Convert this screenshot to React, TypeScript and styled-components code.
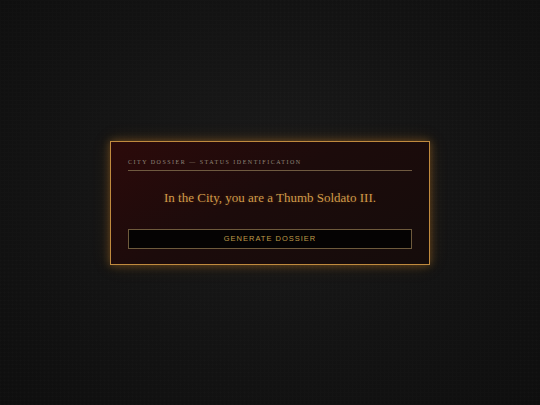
import styled, { createGlobalStyle } from 'styled-components';

const Global = createGlobalStyle`
    html, body {
        margin: 0;
        height: 100%;
        background: #111111;
    }
    #root {
        height: 100%;
    }
`;

const Page = styled.div`
    height: 100%;
    display: flex;
    align-items: center;
    justify-content: center;
    background:
        repeating-linear-gradient(0deg, rgba(255, 255, 255, 0.006) 0 1px, transparent 1px 4px),
        repeating-linear-gradient(90deg, rgba(255, 255, 255, 0.006) 0 1px, transparent 1px 4px),
        radial-gradient(ellipse at 50% 45%, #1a1a1a 0%, #131313 55%, #0e0e0e 100%);
`;

const Card = styled.section`
    box-sizing: border-box;
    width: 320px;
    padding: 17px 17px 15px;
    border: 1px solid #c08a3e;
    background: linear-gradient(150deg, #2c0a0a 0%, #1c0b0b 45%, #150c0b 100%);
    box-shadow: 0 0 8px rgba(200, 130, 40, 0.45), 0 0 18px rgba(200, 120, 30, 0.15);
`;

const Label = styled.div`
    font-family: 'Liberation Serif', 'DejaVu Serif', serif;
    font-size: 6px;
    letter-spacing: 1.5px;
    text-transform: uppercase;
    color: #8f8478;
    padding-bottom: 5px;
    border-bottom: 1px solid #6f5a40;
`;

const Verdict = styled.p`
    margin: 19px 0 0;
    text-align: center;
    font-family: 'Liberation Serif', 'DejaVu Serif', serif;
    font-size: 13px;
    color: #d09a4a;
    text-shadow: 0 0 4px rgba(210, 140, 50, 0.25);
`;

const Button = styled.button`
    display: block;
    width: 100%;
    height: 20px;
    margin-top: 23px;
    background: #050303;
    border: 1px solid #6e5a3c;
    font-family: 'Liberation Sans', Arial, sans-serif;
    font-size: 7.5px;
    letter-spacing: 1px;
    color: #bf9a48;
    cursor: pointer;
`;

export default function App() {
    return (
        <>
            <Global />
            <Page>
                <Card>
                    <Label>City Dossier — Status Identification</Label>
                    <Verdict>In the City, you are a Thumb Soldato III.</Verdict>
                    <Button>GENERATE DOSSIER</Button>
                </Card>
            </Page>
        </>
    );
}
